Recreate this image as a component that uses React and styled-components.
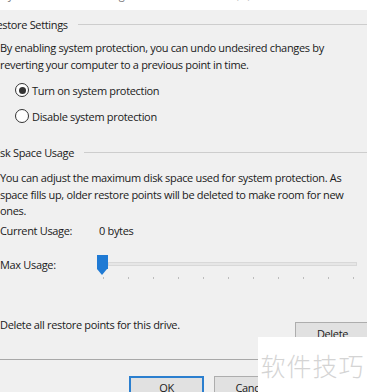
import React from "react";
import styled, { createGlobalStyle } from "styled-components";

const GlobalStyle = createGlobalStyle`
  html, body {
    margin: 0;
    padding: 0;
    background: #f0f0f0;
  }
`;

const Page = styled.div`
  position: relative;
  width: 367px;
  height: 392px;
  overflow: hidden;
  background: #f0f0f0;
  font-family: "Open Sans", "Noto Sans", sans-serif;
  font-size: 11px;
  letter-spacing: -0.33px;
  color: #1a1a1a;
`;

const TabStrip = styled.div`
  height: 10px;
  background: #fff;
  overflow: hidden;
  padding-left: 2px;
`;

const TabText = styled.div`
  margin-top: -13px;
  line-height: 16px;
  color: #777;
`;

const Dialog = styled.div`
  margin-left: -10px;
  width: 400px;
  display: flex;
  flex-direction: column;
`;

const GroupHeader = styled.div`
  display: flex;
  align-items: center;
  gap: 10px;
  height: 16px;
  margin-top: ${(p) => p.$top}px;
`;

const GroupLine = styled.div`
  flex: 1;
  height: 1px;
  background: #cdcdcd;
`;

const Para = styled.p`
  margin: ${(p) => p.$top}px 0 0 10px;
  line-height: 16.5px;
  white-space: nowrap;
`;

const RadioRow = styled.label`
  display: flex;
  align-items: center;
  gap: 3px;
  height: 16px;
  margin: ${(p) => p.$top}px 0 0 25px;
`;

const RadioCircle = styled.span`
  width: 12px;
  height: 12px;
  border: 1px solid #333;
  border-radius: 50%;
  background: #fff;
  display: flex;
  align-items: center;
  justify-content: center;
  &::after {
    content: "";
    width: 7px;
    height: 7px;
    border-radius: 50%;
    background: ${(p) => (p.$checked ? "#333" : "transparent")};
  }
`;

const InfoRow = styled.div`
  display: flex;
  align-items: center;
  height: 16px;
  margin: ${(p) => p.$top}px 0 0 10px;
`;

const InfoLabel = styled.span`
  width: 99px;
`;

const Slider = styled.div`
  position: relative;
  width: 262px;
  height: 16px;
  margin-left: -2px;
`;

const Track = styled.div`
  position: absolute;
  left: 11px;
  width: 247px;
  top: 5px;
  height: 2px;
  background: #e6e6e6;
  border: 1px solid #d8d8d8;
`;

const Thumb = styled.div`
  position: absolute;
  left: 0;
  top: -2px;
  width: 11px;
  height: 14px;
  background: #1f7ad4;
  &::after {
    content: "";
    position: absolute;
    left: 0;
    top: 14px;
    border-left: 5.5px solid transparent;
    border-right: 5.5px solid transparent;
    border-top: 6px solid #1f7ad4;
  }
`;

const Ticks = styled.div`
  position: absolute;
  left: 6px;
  top: 20px;
  display: flex;
  gap: 24px;
`;

const Tick = styled.span`
  width: 1px;
  height: 2px;
  background: #bcbcbc;
`;

const DeleteRow = styled.div`
  display: flex;
  align-items: flex-start;
  justify-content: space-between;
  margin: 44px 0 0 10px;
`;

const DeleteText = styled.span`
  line-height: 16px;
`;

const Button = styled.button`
  width: 75px;
  height: 23px;
  font-family: inherit;
  font-size: 11px;
  letter-spacing: inherit;
  color: #1a1a1a;
  background: #e1e1e1;
  border: ${(p) => (p.$default ? "2px solid #2b7fcf" : "1px solid #adadad")};
  padding: 0;
  margin-top: ${(p) => p.$top || 0}px;
  margin-right: ${(p) => p.$right || 0}px;
`;

const Separator = styled.div`
  height: 1px;
  background: #a8a8a8;
  margin-top: 14px;
  width: 290px;
`;

const ButtonRow = styled.div`
  display: flex;
  gap: 10px;
  margin: 16px 0 0 139px;
`;

const Watermark = styled.div`
  position: absolute;
  left: 258px;
  top: 337px;
  width: 109px;
  height: 55px;
  background: #fff;
  display: flex;
  align-items: center;
  justify-content: center;
  font-family: "Noto Sans CJK SC", sans-serif;
  font-weight: 300;
  font-size: 25px;
  color: #d4d4d4;
  letter-spacing: 1px;
`;

export default function App() {
  return (
    <Page>
      <GlobalStyle />
      <TabStrip>
        <TabText>System Protection settings for the selected drive (C:)</TabText>
      </TabStrip>
      <Dialog>
        <GroupHeader $top={6}>
          <span>Restore Settings</span>
          <GroupLine />
        </GroupHeader>
        <Para $top={8}>
          By enabling system protection, you can undo undesired changes by
          <br />
          reverting your computer to a previous point in time.
        </Para>
        <RadioRow $top={9}>
          <RadioCircle $checked />
          Turn on system protection
        </RadioRow>
        <RadioRow $top={10}>
          <RadioCircle />
          Disable system protection
        </RadioRow>
        <GroupHeader $top={20}>
          <span>Disk Space Usage</span>
          <GroupLine />
        </GroupHeader>
        <Para $top={10}>
          You can adjust the maximum disk space used for system protection. As
          <br />
          space fills up, older restore points will be deleted to make room for new
          <br />
          ones.
        </Para>
        <InfoRow $top={3}>
          <InfoLabel>Current Usage:</InfoLabel>
          <span>0 bytes</span>
        </InfoRow>
        <InfoRow $top={18}>
          <InfoLabel>Max Usage:</InfoLabel>
          <Slider>
            <Track />
            <Thumb />
            <Ticks>
              {Array.from({ length: 11 }).map((_, i) => (
                <Tick key={i} />
              ))}
            </Ticks>
          </Slider>
        </InfoRow>
        <DeleteRow>
          <DeleteText>Delete all restore points for this drive.</DeleteText>
          <Button $top={5} $right={20}>Delete</Button>
        </DeleteRow>
        <Separator />
        <ButtonRow>
          <Button $default>OK</Button>
          <Button>Cancel</Button>
        </ButtonRow>
      </Dialog>
      <Watermark>软件技巧</Watermark>
    </Page>
  );
}
